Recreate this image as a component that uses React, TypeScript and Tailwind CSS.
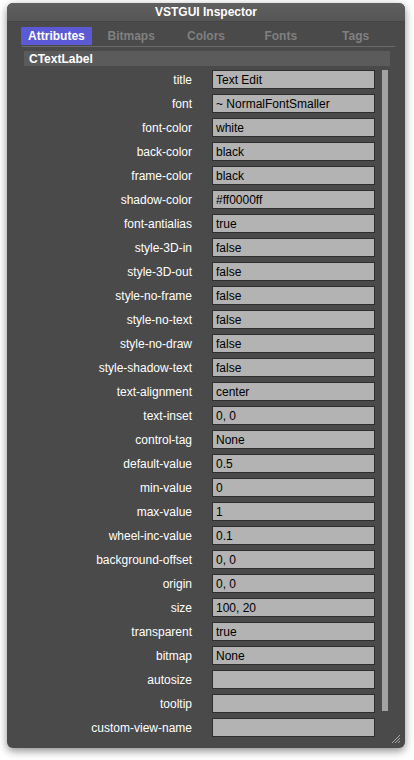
import React from 'react';

const rows: [string, string][] = [
  ['title', 'Text Edit'],
  ['font', '~ NormalFontSmaller'],
  ['font-color', 'white'],
  ['back-color', 'black'],
  ['frame-color', 'black'],
  ['shadow-color', '#ff0000ff'],
  ['font-antialias', 'true'],
  ['style-3D-in', 'false'],
  ['style-3D-out', 'false'],
  ['style-no-frame', 'false'],
  ['style-no-text', 'false'],
  ['style-no-draw', 'false'],
  ['style-shadow-text', 'false'],
  ['text-alignment', 'center'],
  ['text-inset', '0, 0'],
  ['control-tag', 'None'],
  ['default-value', '0.5'],
  ['min-value', '0'],
  ['max-value', '1'],
  ['wheel-inc-value', '0.1'],
  ['background-offset', '0, 0'],
  ['origin', '0, 0'],
  ['size', '100, 20'],
  ['transparent', 'true'],
  ['bitmap', 'None'],
  ['autosize', ''],
  ['tooltip', ''],
  ['custom-view-name', ''],
];

const tabs = ['Attributes', 'Bitmaps', 'Colors', 'Fonts', 'Tags'];

export default function App() {
  return (
    <div className="w-[414px] h-[760px] bg-white pt-[3px] pl-[7px] font-['Liberation_Sans',Arial,sans-serif]">
      <div className="relative w-[398px] h-[745px] rounded-[6px] bg-[#4a4a4a] shadow-[0_3px_8px_rgba(0,0,0,0.45)] overflow-hidden">
        {/* title bar */}
        <div className="h-[19px] bg-gradient-to-b from-[#606060] to-[#565656] border-b border-[#444] flex items-center justify-center text-white text-[12px] font-bold">
          VSTGUI Inspector
        </div>

        {/* tabs */}
        <div className="mx-[12px] mt-[5px] grid grid-cols-5 h-[15px]">
          {tabs.map((t, i) => (
            <div key={t} className="px-[2px]">
              <div
                className={`h-full flex items-center justify-center text-[12px] font-bold ${
                  i === 0 ? 'bg-[#5b59d6] text-white' : 'text-[#808080]'
                }`}
              >
                {t}
              </div>
            </div>
          ))}
        </div>
        <div className="ml-[15px] mr-[10px] mt-[4px] h-px bg-[#6a6a6a]" />

        {/* class header */}
        <div className="ml-[17px] mr-[15px] mt-[4px] h-[15px] bg-[#5b5b5b] flex items-center pl-[5px] text-white text-[12px] font-bold">
          CTextLabel
        </div>

        <div className="flex mt-[4px]">
          <div className="flex flex-col gap-[5px] w-[368px]">
            {rows.map(([k, v]) => (
              <div key={k} className="flex items-center h-[19px]">
                <div className="w-[185px] text-right text-white text-[12px]">{k}</div>
                <div className="ml-[20px] w-[163px] h-[19px] bg-[#b3b3b3] border border-[#2e2e2e] flex items-center pl-[3px] text-[12px] text-black leading-none">
                  {v}
                </div>
              </div>
            ))}
          </div>
          <div className="ml-[7px] w-[6px] h-[641px] bg-[#a3a3a3]" />
        </div>

        {/* resize grip */}
        <svg className="absolute right-[4px] bottom-[4px]" width="11" height="11" viewBox="0 0 11 11">
          <path d="M10 2 L2 10 M10 5 L5 10 M10 8 L8 10" stroke="#a8a8a8" strokeWidth="1" />
        </svg>
      </div>
    </div>
  );
}
